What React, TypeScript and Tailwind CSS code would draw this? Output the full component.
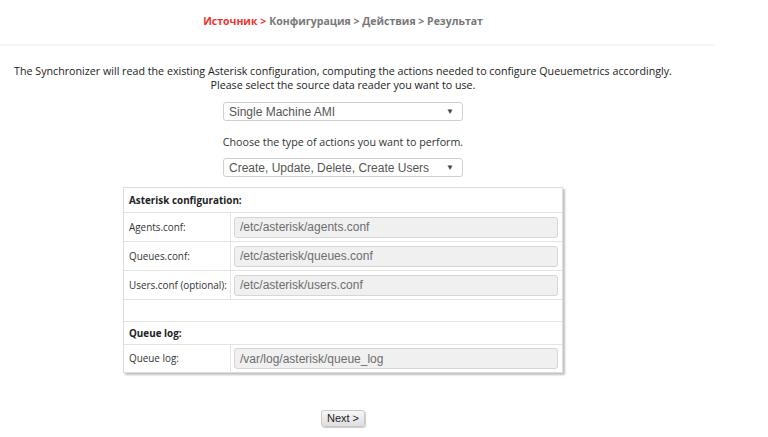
import React from 'react';

const FIELDS = [
  { label: 'Agents.conf:', value: '/etc/asterisk/agents.conf' },
  { label: 'Queues.conf:', value: '/etc/asterisk/queues.conf' },
  { label: 'Users.conf (optional):', value: '/etc/asterisk/users.conf' },
];

function Select({ value }: { value: string }) {
  return (
    <div className="flex h-[19px] w-[240px] items-center justify-between rounded-[3px] border border-[#cfcfcf] bg-white pl-[5px] pr-[8px] font-['Liberation_Sans',Arial,sans-serif] text-[12px] text-[#555]">
      <span>{value}</span>
      <span className="text-[8px] text-[#444]">▼</span>
    </div>
  );
}

function FieldRow({ label, value, h = 'h-[29px]' }: { label: string; value: string; h?: string }) {
  return (
    <div className={`flex ${h} border-t border-[#e4e4e4]`}>
      <div className="flex w-[107px] items-center whitespace-nowrap border-r border-[#e4e4e4] pl-[5px] text-[9.9px] text-[#333]">{label}</div>
      <div className="flex flex-1 items-center pl-[3px] pr-[4px]">
        <div className="flex h-[21px] w-full items-center rounded-[3px] border border-[#d6d6d6] bg-[#f0f0f0] pl-[5px] font-['Liberation_Sans',Arial,sans-serif] text-[12px] text-[#6d6d6d]">
          {value}
        </div>
      </div>
    </div>
  );
}

export default function App() {
  return (
    <div className="min-h-[437px] bg-white font-['Open_Sans',sans-serif] text-[10.7px] text-[#222]">
      <div className="flex h-[44px] w-[686px] items-center justify-center pb-[2px] pt-[1px] text-[10.5px] font-bold text-[#777]">
        <span className="text-[#f0332f]">Источник &gt;</span>
        <span className="ml-[3px]">Конфигурация &gt; Действия &gt; Результат</span>
      </div>
      <div className="h-[2px] w-[715px] bg-[#f5f5f5]" />

      <div className="flex w-[686px] flex-col items-center pt-[18px]">
        <p className="text-center leading-[14px]">
          The Synchronizer will read the existing Asterisk configuration, computing the actions needed to configure Queuemetrics accordingly.
          <br />
          Please select the source data reader you want to use.
        </p>

        <div className="mt-[10px]">
          <Select value="Single Machine AMI" />
        </div>
        <p className="mt-[13px] text-[#333]">Choose the type of actions you want to perform.</p>
        <div className="mt-[8px]">
          <Select value="Create, Update, Delete, Create Users" />
        </div>

        <div className="mt-[10px] w-[440px] border border-[#dcdcdc] bg-white shadow-[2px_2px_2px_rgba(0,0,0,0.25)]">
          <div className="flex h-[24px] items-center pl-[5px] text-[9.9px] font-bold">Asterisk configuration:</div>
          {FIELDS.map((f) => (
            <FieldRow key={f.label} label={f.label} value={f.value} />
          ))}
          <div className="h-[22px] border-t border-[#e4e4e4]" />
          <div className="flex h-[23px] items-center border-t border-[#e4e4e4] pl-[5px] text-[9.9px] font-bold">Queue log:</div>
          <FieldRow label="Queue log:" value="/var/log/asterisk/queue_log" h="h-[28px]" />
        </div>

        <button className="mt-[37px] h-[17px] rounded-[3px] border border-[#c8c8c8] bg-gradient-to-b from-[#f8f8f8] to-[#dedede] px-[5px] font-['Liberation_Sans',Arial,sans-serif] text-[11px] leading-[15px] text-[#222] shadow-[1px_1px_1px_rgba(0,0,0,0.2)]">
          Next &gt;
        </button>
      </div>
    </div>
  );
}
